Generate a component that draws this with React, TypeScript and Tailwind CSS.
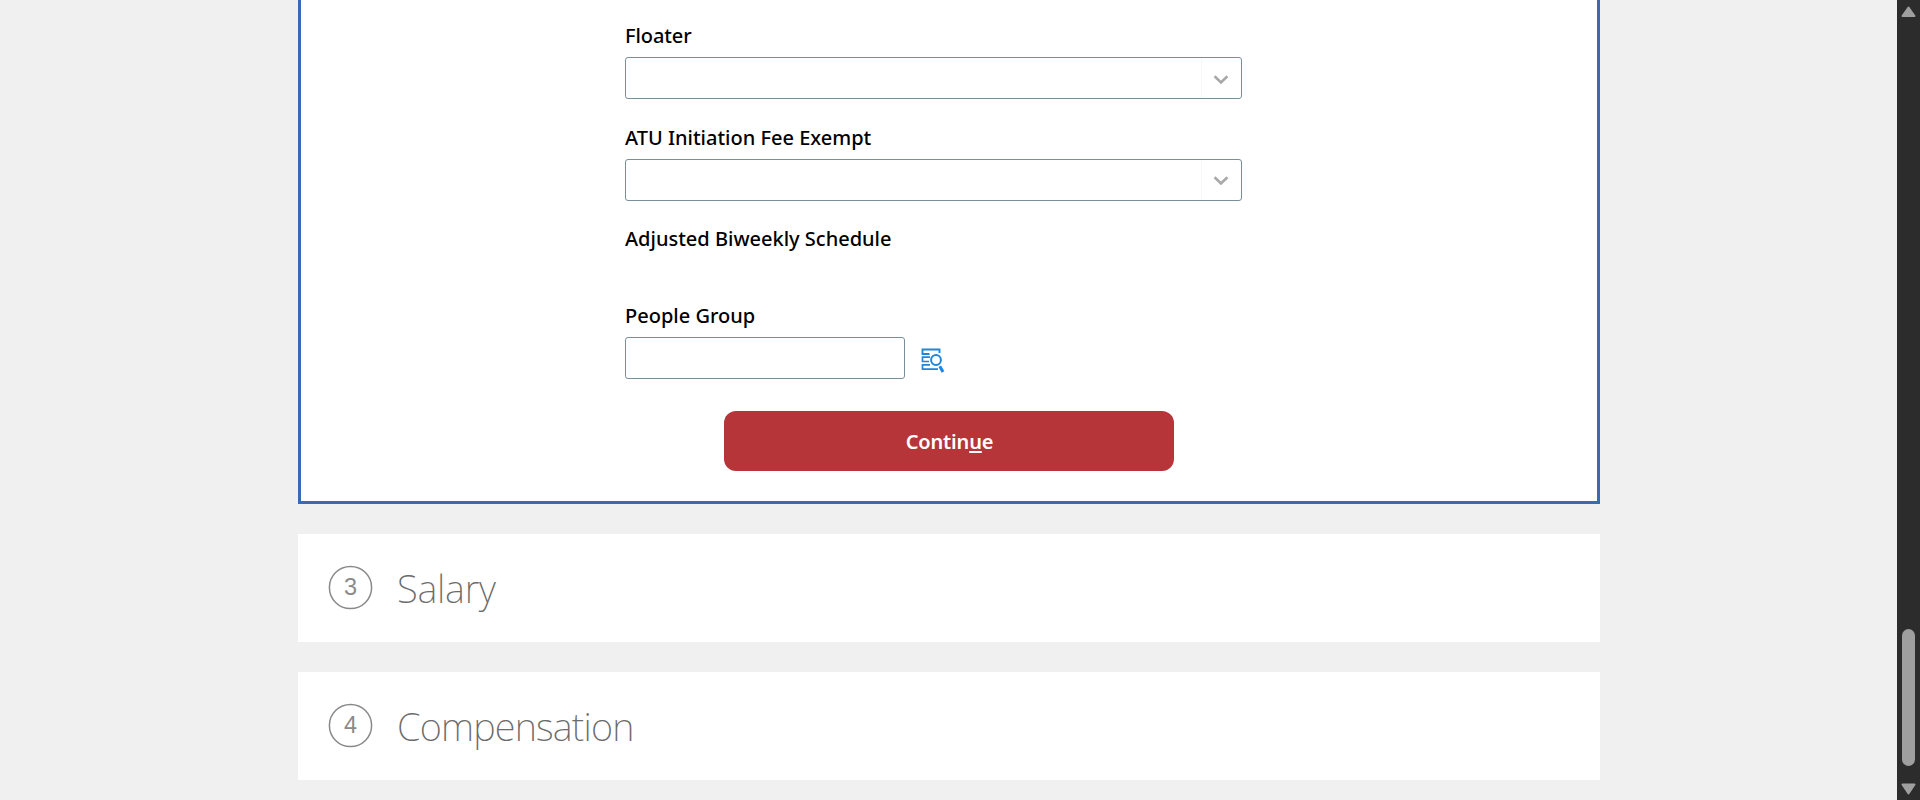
import type { ReactNode } from "react";

function Label({ children, className = "" }: { children: ReactNode; className?: string }) {
  return <div className={`h-[27px] text-xl leading-[27px] font-medium whitespace-nowrap text-black ${className}`}>{children}</div>;
}

function SelectBox({ chevron }: { chevron: string }) {
  return (
    <div className="mt-2 flex h-[42px] w-[617px] justify-end rounded-[3px] border border-[#78909c] bg-white">
      <div className="flex w-10 items-start justify-center border-l border-[#f8f8f8] pr-px">
        <svg className={chevron} width="16" height="10" viewBox="0 0 16 10" fill="none">
          <path d="M1.6 1.3 8 7.5l6.4-6.2" stroke="#a8a8a8" strokeWidth="2.6" />
        </svg>
      </div>
    </div>
  );
}

function LookupIcon() {
  return (
    <svg width="24" height="25" viewBox="0 0 24 25" fill="none" stroke="#2185d8">
      <path d="M8.5 6H1.5V1.5h17V5" strokeWidth="1.9" />
      <path d="M9 9.2H1.5v4.3H8M9 16.8H1.5v4.4H17" strokeWidth="1.7" />
      <circle cx="15" cy="12" r="4.9" strokeWidth="2" />
      <path d="m18.8 18.2 3.2 5.8" strokeWidth="3" />
    </svg>
  );
}

function Step({ number, title, tracking }: { number: number; title: string; tracking: string }) {
  return (
    <section className="flex h-[108px] bg-white">
      <div className="relative mt-[31px] ml-[30px] h-[45px] w-[45px] text-center font-['Liberation_Sans',sans-serif] text-[23.5px] leading-[44px] text-[#8a8a8a]">
        <svg className="absolute inset-0" width="45" height="45" viewBox="0 0 45 45" fill="none">
          <circle cx="22.5" cy="22.5" r="21.1" stroke="#8a8a8a" strokeWidth="1.5" />
        </svg>
        {number}
      </div>
      <h2 className={`mt-[28px] ml-6 text-[38px] leading-[52px] font-extralight text-[#6b6b6b] ${tracking}`}>{title}</h2>
    </section>
  );
}

export default function App() {
  return (
    <div className="flex h-[800px] overflow-hidden bg-[#f0f0f0] font-['Noto_Sans','Open_Sans',sans-serif]">
      <main className="flex flex-1 flex-col gap-[30px] pr-[297px] pl-[298px]">
        <section className="flex h-[504px] flex-col border-x-[3px] border-b-[3px] border-[#3a6ab5] bg-white pt-[22px] pl-[324px]">
          <Label className="tracking-[-0.1px]">Floater</Label>
          <SelectBox chevron="mt-[17px]" />
          <Label className="mt-[25px]">ATU Initiation Fee Exempt</Label>
          <SelectBox chevron="mt-4" />
          <Label className="mt-6">Adjusted Biweekly Schedule</Label>
          <Label className="mt-[50px]">People Group</Label>
          <div className="mt-2 flex">
            <div className="h-[42px] w-[280px] rounded-[3px] border border-[#78909c] bg-white" />
            <div className="mt-[11px] ml-4"><LookupIcon /></div>
          </div>
          <button className="mt-8 ml-[99px] h-[60px] w-[450px] rounded-xl bg-[#b53539] pl-px text-xl leading-[27px] font-semibold tracking-[-0.15px] text-white">
            Contin<span className="underline decoration-2 underline-offset-2">u</span>e
          </button>
        </section>
        <Step number={3} title="Salary" tracking="tracking-[-0.2px]" />
        <Step number={4} title="Compensation" tracking="tracking-[-0.8px]" />
      </main>
      <aside className="flex w-[23px] flex-col bg-[#2c2c2c] pl-1">
        <svg className="mt-[6px]" width="15" height="12" viewBox="0 0 15 12">
          <path d="M7.5 1.5 13.5 10h-12z" fill="#9f9f9f" stroke="#9f9f9f" strokeWidth="2" strokeLinejoin="round" />
        </svg>
        <div className="mt-[611px] ml-px h-[137px] w-[13px] rounded-full bg-[#9f9f9f]" />
        <svg className="mt-[17px]" width="15" height="12" viewBox="0 0 15 12">
          <path d="M7.5 10.5 13.5 1.5h-12z" fill="#9f9f9f" stroke="#9f9f9f" strokeWidth="2" strokeLinejoin="round" />
        </svg>
      </aside>
    </div>
  );
}
